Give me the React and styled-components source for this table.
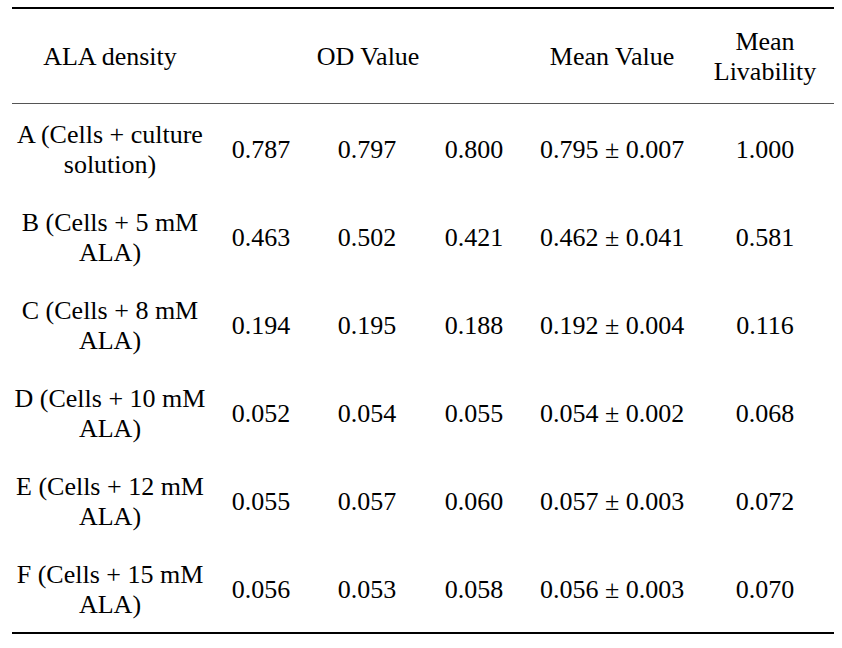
import React from 'react';
import styled, { createGlobalStyle } from 'styled-components';

const GlobalStyle = createGlobalStyle`
  html, body {
    margin: 0;
    padding: 0;
    background: #fff;
  }
`;

const Page = styled.div`
  padding: 7px 8px 0 12px;
  color: #000;
`;

const Table = styled.table`
  width: 822px;
  table-layout: fixed;
  border-collapse: separate;
  border-spacing: 0;
  font-family: "Liberation Serif", "Times New Roman", serif;
  font-size: 26px;
  line-height: 30px;
  color: #000;
`;

const Col = styled.col`
  width: ${(p) => p.$w}px;
`;

const HeadCell = styled.th`
  font-weight: normal;
  text-align: center;
  vertical-align: middle;
  padding: 2px 0 0;
  height: 92px;
  border-top: 2px solid #000;
  border-bottom: 1px solid #555;
`;

const Cell = styled.td`
  text-align: center;
  vertical-align: middle;
  padding: 3px 0 0;
  height: 85px;
  white-space: nowrap;
  border-bottom: ${(p) => (p.$last ? '2px solid #000' : 'none')};
`;

const widths = [196, 106, 106, 108, 168, 138];

const rows = [
  { label: ['A (Cells + culture', 'solution)'], od: ['0.787', '0.797', '0.800'], mean: '0.795 ± 0.007', liv: '1.000' },
  { label: ['B (Cells + 5 mM', 'ALA)'], od: ['0.463', '0.502', '0.421'], mean: '0.462 ± 0.041', liv: '0.581' },
  { label: ['C (Cells + 8 mM', 'ALA)'], od: ['0.194', '0.195', '0.188'], mean: '0.192 ± 0.004', liv: '0.116' },
  { label: ['D (Cells + 10 mM', 'ALA)'], od: ['0.052', '0.054', '0.055'], mean: '0.054 ± 0.002', liv: '0.068' },
  { label: ['E (Cells + 12 mM', 'ALA)'], od: ['0.055', '0.057', '0.060'], mean: '0.057 ± 0.003', liv: '0.072' },
  { label: ['F (Cells + 15 mM', 'ALA)'], od: ['0.056', '0.053', '0.058'], mean: '0.056 ± 0.003', liv: '0.070' },
];

const App = () => {
  return (
    <Page>
      <GlobalStyle />
      <Table>
        <colgroup>
          {widths.map((w, i) => (
            <Col key={i} $w={w} />
          ))}
        </colgroup>
        <thead>
          <tr>
            <HeadCell>ALA density</HeadCell>
            <HeadCell colSpan={3}>OD Value</HeadCell>
            <HeadCell>Mean Value</HeadCell>
            <HeadCell>
              Mean
              <br />
              Livability
            </HeadCell>
          </tr>
        </thead>
        <tbody>
          {rows.map((r, i) => {
            const last = i === rows.length - 1;
            return (
              <tr key={r.label[0]}>
                <Cell $last={last}>
                  {r.label[0]}
                  <br />
                  {r.label[1]}
                </Cell>
                {r.od.map((v, j) => (
                  <Cell key={j} $last={last}>{v}</Cell>
                ))}
                <Cell $last={last}>{r.mean}</Cell>
                <Cell $last={last}>{r.liv}</Cell>
              </tr>
            );
          })}
        </tbody>
      </Table>
    </Page>
  );
};

export default App;
